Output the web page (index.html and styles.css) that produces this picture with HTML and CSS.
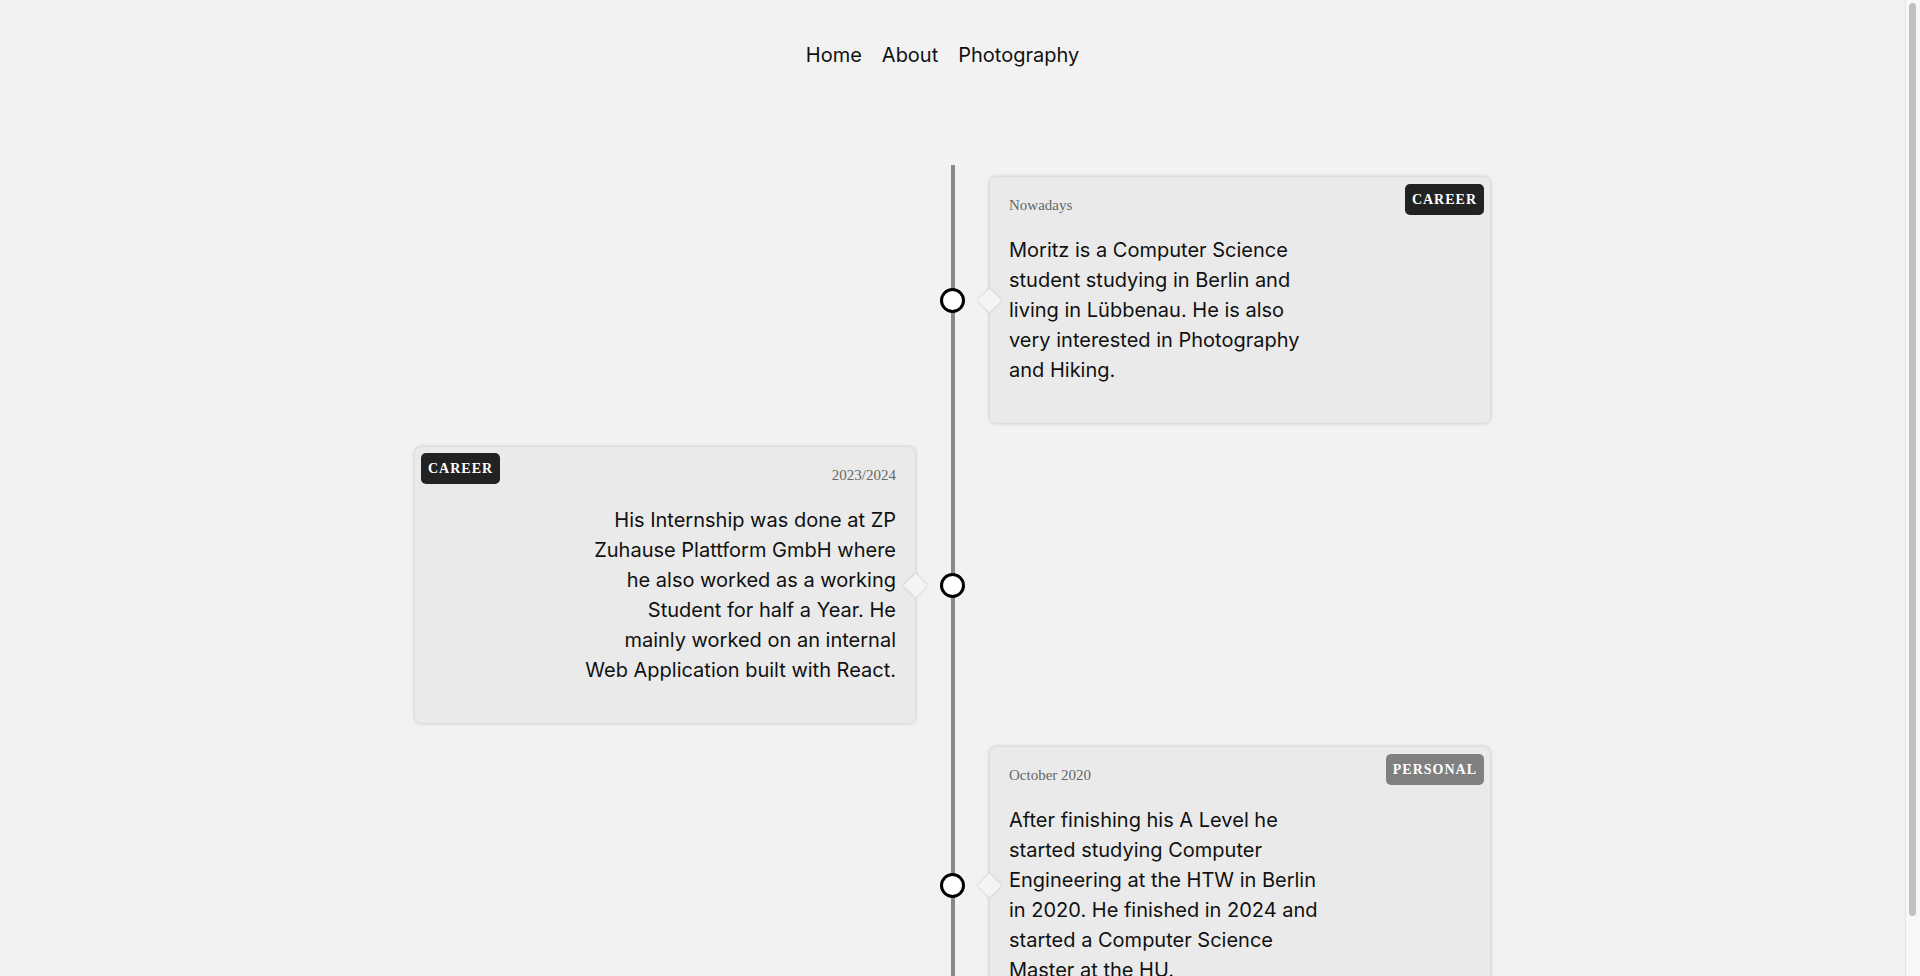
FILE: index.html
```html
<!DOCTYPE html>
<html lang="en">
<head>
<meta charset="utf-8">
<title>Moritz – Timeline</title>
<link rel="stylesheet" href="styles.css">
</head>
<body>
<header class="site-header">
  <nav class="nav">
    <a class="nav-link" href="#">Home</a>
    <a class="nav-link" href="#">About</a>
    <a class="nav-link" href="#">Photography</a>
  </nav>
</header>
<main class="timeline">
  <section class="entry entry-right">
    <span class="dot"></span>
    <article class="card">
      <span class="badge badge-career">CAREER</span>
      <div class="date">Nowadays</div>
      <p class="text">Moritz is a Computer Science student studying in Berlin and living in Lübbenau. He is also very interested in Photography and Hiking.</p>
    </article>
  </section>
  <section class="entry entry-left">
    <article class="card">
      <span class="badge badge-career">CAREER</span>
      <div class="date">2023/2024</div>
      <p class="text">His Internship was done at ZP Zuhause Plattform GmbH where he also worked as a working Student for half a Year. He mainly worked on an internal Web Application built with React.</p>
    </article>
    <span class="dot"></span>
  </section>
  <section class="entry entry-right">
    <span class="dot"></span>
    <article class="card">
      <span class="badge badge-personal">PERSONAL</span>
      <div class="date">October 2020</div>
      <p class="text">After finishing his A Level he started studying Computer Engineering at the HTW in Berlin in 2020. He finished in 2024 and started a Computer Science Master at the HU.</p>
    </article>
  </section>
</main>
<div class="scrollbar" aria-hidden="true"><div class="scrollbar-thumb"></div></div>
</body>
</html>
```
FILE: styles.css
```css
html {
  background: #f2f2f2;
}
body {
  margin: 0 15px 0 0;
  background: #f2f2f2;
  color: #111;
  font-family: Inter, "Noto Sans", sans-serif;
}
.site-header {
  padding: 43px 0 98px;
}
.nav {
  display: flex;
  justify-content: center;
  line-height: 24px;
}
.nav-link {
  color: #111;
  text-decoration: none;
  font-size: 20px;
  margin-right: 20px;
}
.timeline {
  position: relative;
  width: 1075px;
  margin: 0 auto;
  padding: 12px 0 20px;
  display: flex;
  flex-direction: column;
  gap: 24px;
}
.timeline::before {
  content: "";
  position: absolute;
  top: 0;
  bottom: 0;
  left: 50%;
  width: 4px;
  margin-left: -2px;
  background: #888;
}
.entry {
  display: grid;
  grid-template-columns: 500px 75px 500px;
  align-items: center;
}
.dot {
  grid-column: 2;
  grid-row: 1;
  justify-self: center;
  width: 19px;
  height: 19px;
  border: 3px solid #000;
  border-radius: 50%;
  background: #fff;
  position: relative;
  z-index: 2;
}
.card {
  grid-row: 1;
  position: relative;
  background: #eaeaea;
  border-radius: 6px;
  box-shadow: 0 0 4px rgba(0, 0, 0, 0.22);
  padding: 19px 19px 38px;
  box-sizing: border-box;
  align-self: start;
}
.entry-right .card {
  grid-column: 3;
}
.entry-left .card {
  grid-column: 1;
  text-align: right;
}
.card::before {
  content: "";
  position: absolute;
  top: 50%;
  width: 17px;
  height: 17px;
  margin-top: -8.5px;
  background: #f4f4f4;
  transform: rotate(45deg);
  box-shadow: 0 0 3px rgba(0, 0, 0, 0.18);
}
.entry-right .card::before {
  left: -9px;
}
.entry-left .card::before {
  right: -9px;
}
.badge {
  position: absolute;
  top: 7px;
  height: 31px;
  line-height: 31px;
  padding: 0 7px;
  border-radius: 5px;
  color: #fff;
  font-family: "Liberation Serif", "Times New Roman", serif;
  font-size: 14px;
  font-weight: 700;
  letter-spacing: 1px;
}
.entry-right .badge {
  right: 6px;
}
.entry-left .badge {
  left: 6px;
  top: 6px;
}
.badge-career {
  background: #222;
}
.badge-personal {
  background: #808080;
}
.date {
  font-family: "Liberation Serif", "Times New Roman", serif;
  font-size: 15px;
  line-height: 18px;
  color: #666;
}
.text {
  margin: 21px 0 0;
  font-size: 20px;
  line-height: 30px;
  max-width: 314px;
}
.entry-left .text {
  margin-left: auto;
}
.scrollbar {
  position: fixed;
  top: 0;
  right: 0;
  bottom: 0;
  width: 14px;
  background: #f8f8f8;
  border-left: 1px solid #e4e4e4;
}
.scrollbar-thumb {
  margin: 3px 0 0 3px;
  width: 7px;
  height: 913px;
  border-radius: 4px;
  background: #c1c1c1;
}
```
